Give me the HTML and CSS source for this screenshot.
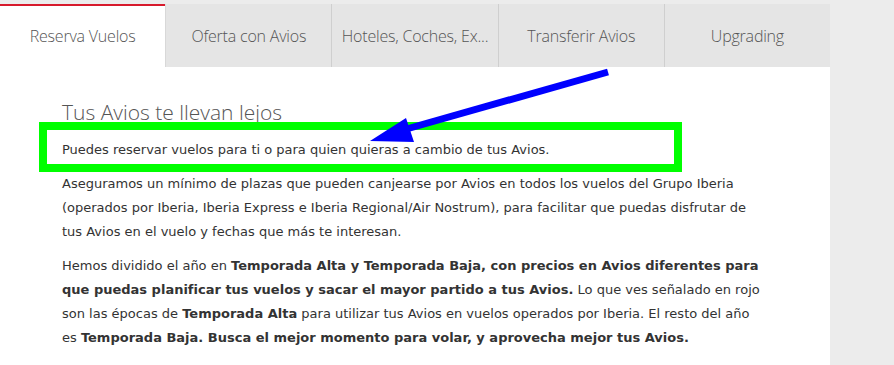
FILE: index.html
```html
<!DOCTYPE html>
<html lang="es">
<head>
    <meta charset="UTF-8">
    <title>Reserva Vuelos con Avios</title>
    <link rel="stylesheet" href="styles.css">
</head>
<body>
    <div class="page">
        <ul class="tabs">
            <li class="tab active">Reserva Vuelos</li>
            <li class="tab">Oferta con Avios</li>
            <li class="tab">Hoteles, Coches, Ex...</li>
            <li class="tab">Transferir Avios</li>
            <li class="tab">Upgrading</li>
        </ul>

        <div class="content">
            <h2>Tus Avios te llevan lejos</h2>
            <p>Puedes reservar vuelos para ti o para quien quieras a cambio de tus Avios.</p>
            <p>Aseguramos un mínimo de plazas que pueden canjearse por Avios en todos los vuelos del Grupo Iberia (operados por Iberia, Iberia Express e Iberia Regional/Air Nostrum), para facilitar que puedas disfrutar de tus Avios en el vuelo y fechas que más te interesan.</p>
            <p>Hemos dividido el año en <b>Temporada Alta y Temporada Baja, con precios en Avios diferentes para que puedas planificar tus vuelos y sacar el mayor partido a tus Avios.</b> Lo que ves señalado en rojo son las épocas de <b>Temporada Alta</b> para utilizar tus Avios en vuelos operados por Iberia. El resto del año es <b>Temporada Baja. Busca el mejor momento para volar, y aprovecha mejor tus Avios.</b></p>
        </div>

        <!-- annotation drawn over the screenshot -->
        <div class="highlight"></div>
        <svg class="arrow" width="830" height="200" viewBox="0 0 830 200">
            <line x1="608" y1="68" x2="396" y2="128" stroke="#0000ff" stroke-width="7"/>
            <polygon points="370,137 406,114 414,138" fill="#0000ff"/>
        </svg>
    </div>
</body>
</html>
```

FILE: styles.css
```css
body {
    margin: 0;
    background: #ececec;
    font-family: "DejaVu Sans", Verdana, sans-serif;
}
.page {
    position: relative;
    width: 830px;
    height: 361px;
    margin-top: 4px;
    background: white;
    overflow: hidden;
}
.tabs {
    display: flex;
    list-style: none;
    margin: 0;
    padding: 0;
    height: 63px;
}
.tab {
    flex: 1;
    display: flex;
    justify-content: center;
    align-items: center;
    background: #e5e5e5;
    border-left: 1px solid #cfcfcf;
    color: #555;
    font-family: "Open Sans", sans-serif;
    font-weight: 300;
    font-size: 16px;
    letter-spacing: -0.2px;
}
.tab:first-child {
    border-left: none;
}
.tab.active {
    background: white;
    border-top: 2px solid #d71a2c;
    padding-bottom: 2px;
}
.tab.active + .tab {
    border-left-color: #d8d8d8;
}
.content {
    padding: 30px 70px 0 62px;
}
h2 {
    margin: 0 0 11px;
    font-family: "Open Sans", sans-serif;
    font-weight: 300;
    font-size: 21px;
    line-height: 30px;
    color: #555;
}
p {
    margin: 0 0 10px;
    font-size: 13px;
    line-height: 24px;
    color: #333;
}
.highlight {
    position: absolute;
    left: 39px;
    top: 118px;
    width: 627px;
    height: 34px;
    border: 8px solid #00ff00;
}
.arrow {
    position: absolute;
    left: 0;
    top: 0;
}
```
